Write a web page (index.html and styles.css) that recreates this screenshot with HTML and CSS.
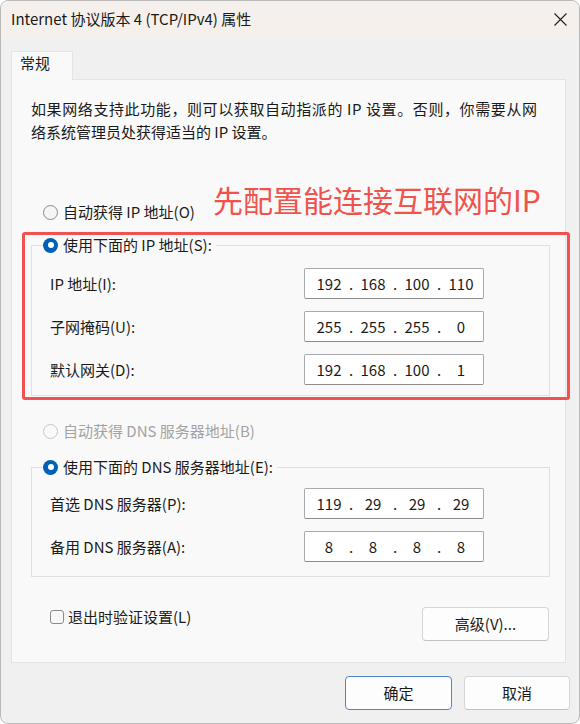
FILE: index.html
```html
<!DOCTYPE html>
<html lang="zh-CN">
<head>
<meta charset="utf-8">
<title>Internet 协议版本 4 (TCP/IPv4) 属性</title>
<link rel="stylesheet" href="styles.css">
</head>
<body>
<div class="window">
  <div class="titlebar">
    <span class="title">Internet 协议版本 4 (TCP/IPv4) 属性</span>
    <svg class="close" width="13" height="13" viewBox="0 0 13 13"><path d="M0.5 0.5 L12.5 12.5 M12.5 0.5 L0.5 12.5" stroke="#1f1f1f" stroke-width="1.1" fill="none"/></svg>
  </div>
  <div class="main">
    <div class="tabs"><div class="tab">常规</div></div>
    <div class="panel">
      <p class="intro"><span class="line first-line">如果网络支持此功能，则可以获取自动指派的 IP 设置。否则，你需要从网</span><span class="line">络系统管理员处获得适当的 IP 设置。</span></p>

      <div class="radio-row first"><span class="radio"></span><span>自动获得 IP 地址(O)</span></div>

      <fieldset class="group ip-group">
        <legend class="radio-row"><span class="radio checked"></span><span>使用下面的 IP 地址(S):</span></legend>
        <div class="field">
          <span class="label">IP 地址(I):</span>
          <div class="ipbox"><span class="seg">192</span><span class="dot">.</span><span class="seg">168</span><span class="dot">.</span><span class="seg">100</span><span class="dot">.</span><span class="seg">110</span></div>
        </div>
        <div class="field">
          <span class="label">子网掩码(U):</span>
          <div class="ipbox"><span class="seg">255</span><span class="dot">.</span><span class="seg">255</span><span class="dot">.</span><span class="seg">255</span><span class="dot">.</span><span class="seg">0</span></div>
        </div>
        <div class="field">
          <span class="label">默认网关(D):</span>
          <div class="ipbox"><span class="seg">192</span><span class="dot">.</span><span class="seg">168</span><span class="dot">.</span><span class="seg">100</span><span class="dot">.</span><span class="seg">1</span></div>
        </div>
      </fieldset>

      <div class="radio-row dns-auto disabled"><span class="radio"></span><span>自动获得 DNS 服务器地址(B)</span></div>

      <fieldset class="group dns-group">
        <legend class="radio-row"><span class="radio checked"></span><span>使用下面的 DNS 服务器地址(E):</span></legend>
        <div class="field">
          <span class="label">首选 DNS 服务器(P):</span>
          <div class="ipbox"><span class="seg">119</span><span class="dot">.</span><span class="seg">29</span><span class="dot">.</span><span class="seg">29</span><span class="dot">.</span><span class="seg">29</span></div>
        </div>
        <div class="field">
          <span class="label">备用 DNS 服务器(A):</span>
          <div class="ipbox"><span class="seg">8</span><span class="dot">.</span><span class="seg">8</span><span class="dot">.</span><span class="seg">8</span><span class="dot">.</span><span class="seg">8</span></div>
        </div>
      </fieldset>

      <div class="bottom-row">
        <label class="check-row"><span class="checkbox"></span><span>退出时验证设置(L)</span></label>
        <button class="btn advanced">高级(V)...</button>
      </div>
    </div>
    <div class="footer">
      <button class="btn ok">确定</button>
      <button class="btn cancel">取消</button>
    </div>
  </div>
  <div class="note-text">先配置能连接互联网的IP</div>
  <div class="note-box"></div>
</div>
</body>
</html>
```

FILE: styles.css
```css
* { box-sizing: border-box; }

html, body {
  margin: 0;
  padding: 0;
  background: #ffffff;
}

body {
  font-family: "Noto Sans CJK SC", "Noto Sans", sans-serif;
  font-size: 15px;
  color: #1b1b1b;
}

.window {
  position: relative;
  width: 580px;
  height: 724px;
  border: 1px solid #b9b9b9;
  border-radius: 8px;
  background: #f0f0f0;
  overflow: hidden;
  display: flex;
  flex-direction: column;
}

.titlebar {
  height: 39px;
  flex: none;
  background: #f5f0ec;
  display: flex;
  align-items: center;
  justify-content: space-between;
  padding: 0 12px 3px 10px;
}

.title {
  font-size: 15px;
  line-height: 20px;
  color: #1a1a1a;
  white-space: nowrap;
}

.close { display: block; }

.main {
  flex: 1;
  padding: 11px 13px 0 10px;
  display: flex;
  flex-direction: column;
}

.tabs {
  display: flex;
}

.tab {
  position: relative;
  z-index: 1;
  width: 62px;
  height: 29px;
  margin-bottom: -1px;
  padding: 1px 0 0 8px;
  line-height: 20px;
  background: #f9f9f9;
  border: 1px solid #e4e4e4;
  border-bottom: none;
  color: #1a1a1a;
}

.panel {
  height: 584px;
  background: #f9f9f9;
  border: 1px solid #e4e4e4;
  padding: 17px 15px 21px 19px;
  display: flex;
  flex-direction: column;
}

.intro {
  margin: 0;
  line-height: 23px;
  color: #1a1a1a;
}

.intro .line {
  display: block;
  white-space: nowrap;
}

.intro .first-line {
  letter-spacing: 0.6px;
}

.radio-row {
  display: flex;
  align-items: center;
  gap: 5px;
  height: 20px;
  line-height: 20px;
  white-space: nowrap;
}

.radio-row.first {
  margin: 59px 0 0 12px;
}

.radio {
  width: 15px;
  height: 15px;
  flex: none;
  border-radius: 50%;
  border: 1px solid #8a8a8a;
  background: #f5f5f5;
  position: relative;
}

.radio.checked {
  border: none;
  background: #0060b8;
}

.radio.checked::after {
  content: "";
  position: absolute;
  left: 4.5px;
  top: 4.5px;
  width: 6px;
  height: 6px;
  border-radius: 50%;
  background: #ffffff;
}

.disabled { color: #a3a3a3; }
.disabled .radio { border-color: #c6c6c6; background: #f9f9f9; }

.group {
  margin: 0;
  padding: 0;
  border: 1px solid #e0e0e0;
  min-inline-size: 0;
}

.group legend {
  margin-left: 11px;
  padding: 0 4px 0 0;
}

.ip-group {
  margin-top: 13px;
  padding-bottom: 10px;
}

.dns-auto {
  margin: 25px 0 0 12px;
}

.dns-group {
  margin-top: 16px;
  padding-bottom: 14px;
}

.field {
  display: flex;
  align-items: center;
  padding-left: 18px;
  margin-top: 12px;
}

.ip-group .field:first-of-type { margin-top: 13px; }
.dns-group .field:first-of-type { margin-top: 11px; }

.label {
  width: 254px;
  flex: none;
  white-space: nowrap;
}

.ipbox {
  width: 180px;
  height: 31px;
  display: flex;
  align-items: center;
  padding-left: 7px;
  background: #ffffff;
  border: 1px solid #a9a9a9;
  border-bottom-color: #8c8c8c;
  border-radius: 2px;
  color: #1b1b1b;
}

.seg {
  width: 34px;
  text-align: center;
}

.dot {
  width: 10px;
  text-align: center;
}

.bottom-row {
  margin-top: 30px;
  display: flex;
  align-items: flex-start;
  justify-content: space-between;
  padding-left: 19px;
  padding-right: 1px;
}

.check-row {
  display: flex;
  align-items: center;
  gap: 4px;
  line-height: 20px;
}

.checkbox {
  width: 14px;
  height: 14px;
  border: 1px solid #8a8a8a;
  border-radius: 3px;
  background: #f7f7f7;
}

.btn {
  font-family: inherit;
  font-size: 15px;
  color: #1a1a1a;
  height: 34px;
  background: #fdfdfd;
  border: 1px solid #d6d6d6;
  border-bottom-color: #c2c2c2;
  border-radius: 4px;
  padding: 0 0 2px 0;
}

.advanced { width: 127px; }

.footer {
  display: flex;
  justify-content: flex-end;
  gap: 12px;
  padding: 13px 0 0 0;
  margin-right: -4px;
}

.footer .ok { width: 107px; }
.footer .cancel { width: 106px; }

.btn.ok {
  border-color: #4f87c3;
}

.note-text {
  position: absolute;
  left: 212px;
  top: 180px;
  font-size: 30px;
  line-height: 36px;
  color: #f0524c;
  white-space: nowrap;
}

.note-box {
  position: absolute;
  left: 21px;
  top: 231px;
  width: 548px;
  height: 168px;
  border: 3px solid #f2514f;
  border-radius: 3px;
}
```
